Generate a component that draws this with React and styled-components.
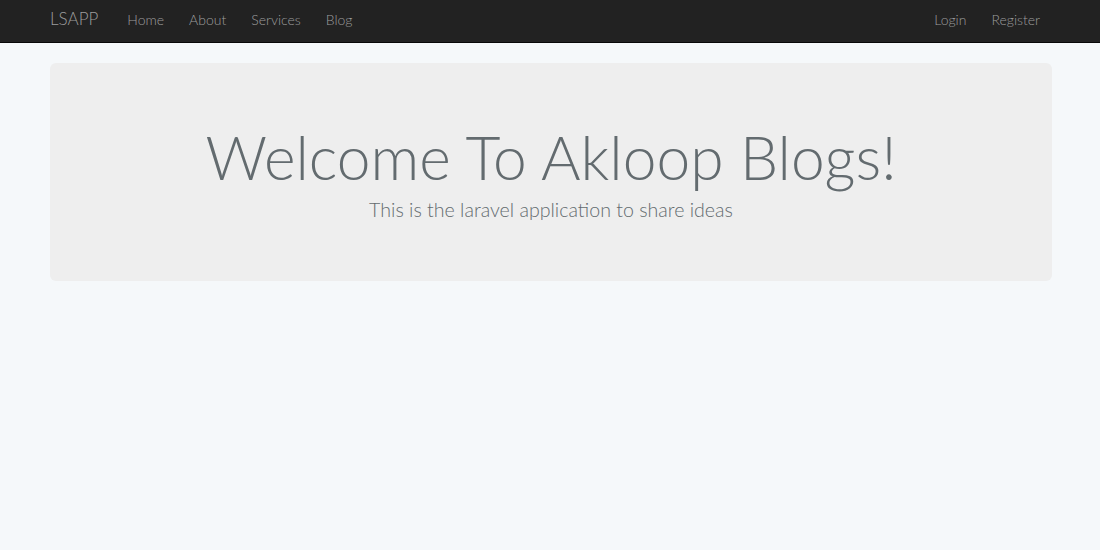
import React from 'react';
import styled, { createGlobalStyle } from 'styled-components';

const GlobalStyle = createGlobalStyle`
  html, body {
    margin: 0;
    padding: 0;
  }
  body {
    background: #f5f8fa;
    color: #636b6f;
    font-family: Lato, 'Open Sans', sans-serif;
    font-weight: 300;
  }
`;

const Navbar = styled.nav`
  height: 43px;
  background: #222222;
  border-bottom: 1px solid #080808;
  box-sizing: border-box;
`;

const NavInner = styled.div`
  width: 1000px;
  margin: 0 auto;
  height: 100%;
  box-sizing: border-box;
  padding-bottom: 6px;
  display: flex;
  align-items: center;
`;

const Brand = styled.a`
  font-size: 17px;
  color: #9d9d9d;
  margin-right: 29px;
  text-decoration: none;
`;

const NavList = styled.ul`
  display: flex;
  gap: 25px;
  list-style: none;
  margin: 0;
  padding: 0;
  margin-left: ${(p) => (p.$right ? 'auto' : '0')};
  margin-right: ${(p) => (p.$right ? '10px' : '0')};
`;

const NavLink = styled.a`
  font-size: 14px;
  color: #9d9d9d;
  text-decoration: none;
`;

const Container = styled.main`
  width: 1002px;
  margin: 20px 0 0 50px;
`;

const Jumbotron = styled.section`
  background: #eeeeee;
  border-radius: 6px;
  height: 218px;
  box-sizing: border-box;
  padding-top: 58px;
  text-align: center;
`;

const Title = styled.h1`
  margin: 0;
  font-size: 60.5px;
  font-weight: 300;
  line-height: 1.2;
  color: #636b6f;
`;

const Lead = styled.p`
  margin: 4px 0 0;
  font-size: 19.6px;
  font-weight: 300;
  color: #636b6f;
`;

const App = () => {
  return (
    <>
      <GlobalStyle />
      <Navbar>
        <NavInner>
          <Brand href='#'>LSAPP</Brand>
          <NavList>
            <li><NavLink href='#'>Home</NavLink></li>
            <li><NavLink href='#'>About</NavLink></li>
            <li><NavLink href='#'>Services</NavLink></li>
            <li><NavLink href='#'>Blog</NavLink></li>
          </NavList>
          <NavList $right>
            <li><NavLink href='#'>Login</NavLink></li>
            <li><NavLink href='#'>Register</NavLink></li>
          </NavList>
        </NavInner>
      </Navbar>
      <Container>
        <Jumbotron>
          <Title>Welcome To Akloop Blogs!</Title>
          <Lead>This is the laravel application to share ideas</Lead>
        </Jumbotron>
      </Container>
    </>
  );
};

export default App;
